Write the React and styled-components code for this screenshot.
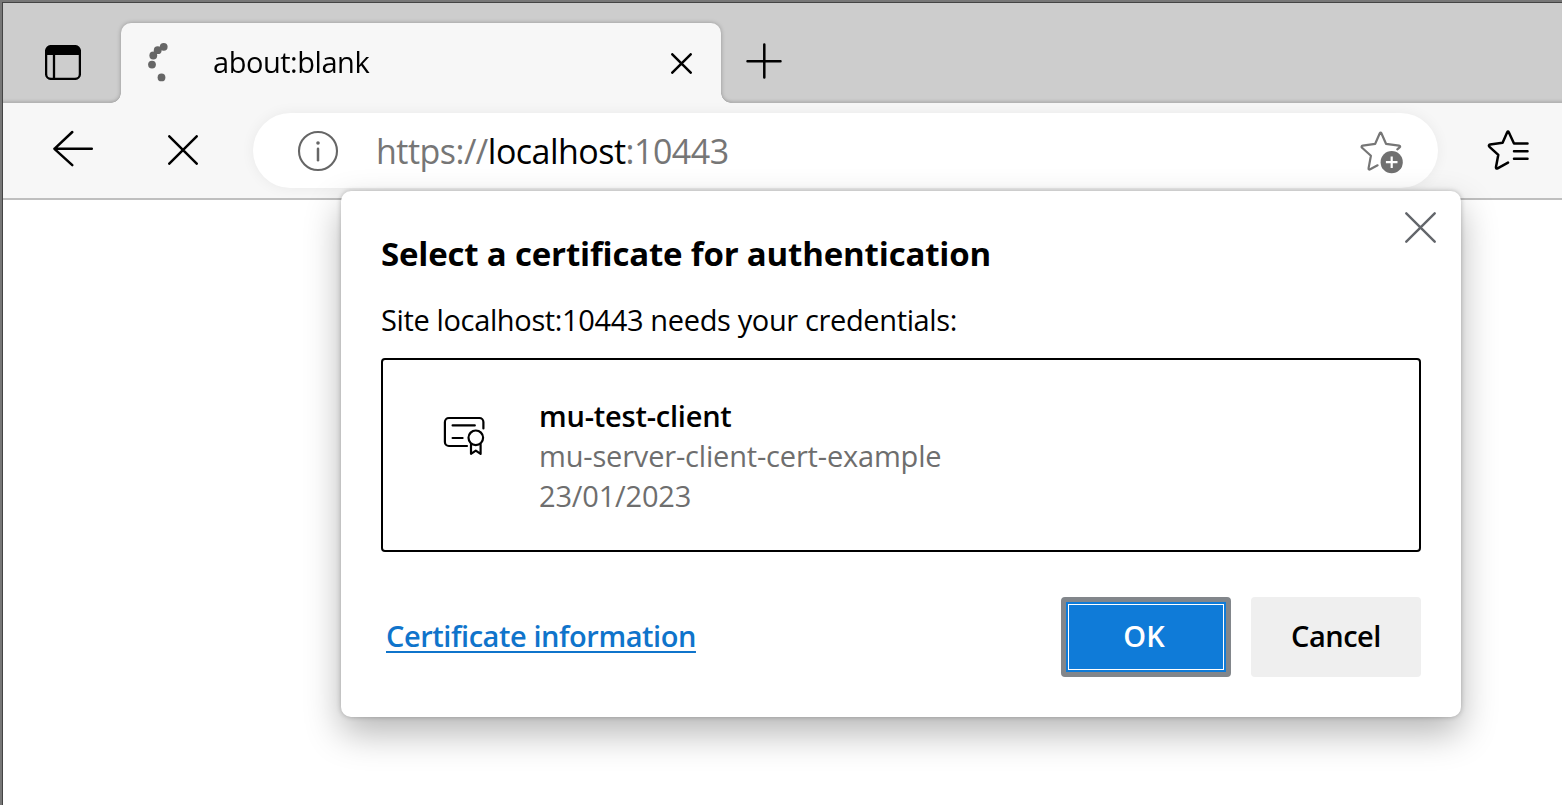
import React from "react";
import styled, { createGlobalStyle } from "styled-components";

const GlobalStyle = createGlobalStyle`
  * { box-sizing: border-box; }
  body { margin: 0; overflow: hidden; background: #fff; font-family: "Open Sans", "Noto Sans", sans-serif; color: #000; }
  svg { display: block; flex: none; }
`;

const Frame = styled.div`
  height: 805px;
  border: solid #777;
  border-width: 2px 0 0 2px;
`;

const Browser = styled.div`
  height: 803px;
  display: flex;
  flex-direction: column;
  border: solid #444;
  border-width: 1px 0 0 1px;
  background: #fff;
`;

const TabStrip = styled.div`
  height: 100px;
  flex: none;
  display: flex;
  align-items: flex-start;
  overflow: hidden;
  background: #cdcdcd;
  box-shadow: inset 0 -4px 3px -2px rgba(0, 0, 0, 0.14);
`;

const StripAction = styled.div`
  width: ${(p) => p.$width}px;
  padding: ${(p) => p.$pad};
`;

const Tab = styled.div`
  position: relative;
  width: 600px;
  height: 80px;
  margin-top: 20px;
  padding: 0 29px 0 25px;
  display: flex;
  align-items: center;
  background: #f7f7f7;
  border-radius: 10px 10px 0 0;
  filter: drop-shadow(0 0 2px rgba(0, 0, 0, 0.28));

  &::before, &::after {
    content: "";
    position: absolute;
    bottom: 0;
    width: 10px;
    height: 10px;
  }
  &::before { left: -10px; background: radial-gradient(circle at 0 0, transparent 9.5px, #f7f7f7 10px); }
  &::after { right: -10px; background: radial-gradient(circle at 100% 0, transparent 9.5px, #f7f7f7 10px); }
  & > svg:first-child { margin-bottom: 2px; }
  & > svg:last-child { margin-top: 1px; }
`;

const TabTitle = styled.div`
  flex: 1;
  margin: 0 0 3px 39px;
  font-size: 29px;
  line-height: 40px;
  letter-spacing: -0.46px;
  white-space: nowrap;
`;

const Toolbar = styled.div`
  height: 97px;
  flex: none;
  display: flex;
  align-items: center;
  padding: 0 32px 2px 49px;
  background: #f7f7f7;
  border-bottom: 2px solid #bfbfbf;
  & > svg { margin-top: 2px; }
`;

const ToolButton = styled.div`
  width: ${(p) => p.$width}px;
  padding-bottom: ${(p) => p.$lift || 0}px;
`;

const AddressBar = styled.div`
  width: 1185px;
  height: 75px;
  margin: 2px 49px 0 0;
  padding: 0 34px 0 44px;
  display: flex;
  align-items: center;
  border-radius: 38px;
  background: #fff;
  box-shadow: 0 0 14px rgba(0, 0, 0, 0.06);
  flex: 1;
  & > svg:last-child { margin-top: 2px; }
`;

const Url = styled.div`
  flex: 1;
  margin-left: 37px;
  font-size: 34px;
  line-height: 46px;
  letter-spacing: -0.52px;
  white-space: nowrap;
  color: #767676;
  & b { font-weight: 400; color: #000; }
`;

const Page = styled.div`
  flex: 1;
  background: #fff;
`;

const Dialog = styled.section`
  position: absolute;
  left: 341px;
  top: 191px;
  width: 1120px;
  height: 526px;
  padding: 40px;
  display: flex;
  flex-direction: column;
  border-radius: 10px;
  background: #fff;
  box-shadow: 0 16px 36px rgba(0, 0, 0, 0.29), 0 0 5px rgba(0, 0, 0, 0.25);
`;

const CloseButton = styled.div`
  position: absolute;
  top: 21px;
  right: 25px;
`;

const Title = styled.h1`
  margin: 0;
  font-size: 33px;
  line-height: 46px;
  font-weight: 700;
  letter-spacing: -0.18px;
  white-space: nowrap;
`;

const Message = styled.p`
  margin: 23px 0 18px;
  font-size: 29px;
  line-height: 40px;
  letter-spacing: -0.36px;
  white-space: nowrap;
`;

const CertificateRow = styled.div`
  height: 194px;
  padding: 36px 0 0 60px;
  display: flex;
  align-items: flex-start;
  gap: 52px;
  border: 2px solid #000;
  border-radius: 4px;
  & > svg { margin-top: 19px; }
`;

const CertificateText = styled.div`
  font-size: 29px;
  line-height: 40px;
  white-space: nowrap;
`;

const Subject = styled.div`
  font-weight: 600;
  letter-spacing: -0.22px;
`;

const Detail = styled.div`
  color: #6e6e6e;
  letter-spacing: -0.18px;
`;

const Footer = styled.footer`
  margin-top: 45px;
  display: flex;
  align-items: center;
  gap: 20px;
`;

const InfoLink = styled.a`
  margin: 0 auto 2px 5px;
  font-size: 29px;
  line-height: 36px;
  font-weight: 600;
  letter-spacing: -0.44px;
  color: #0f74cb;
  text-decoration: underline;
  text-decoration-thickness: 2px;
  text-underline-offset: 4px;
  text-decoration-skip-ink: none;
  white-space: nowrap;
`;

const Button = styled.button`
  width: 170px;
  height: 80px;
  padding: ${(p) => (p.$primary ? "0 4px 2px 0" : "0 0 2px")};
  border: ${(p) => (p.$primary ? "5px solid #82868b" : "0")};
  border-radius: 4px;
  font: 600 29px/40px "Open Sans", "Noto Sans", sans-serif;
  letter-spacing: ${(p) => (p.$primary ? "0" : "-0.5px")};
  color: ${(p) => (p.$primary ? "#fff" : "#000")};
  background: ${(p) => (p.$primary ? "#0f7bd8" : "#efefef")};
  outline: ${(p) => (p.$primary ? "1px solid #fff" : "none")};
  outline-offset: -8px;
`;

const Cross = ({ size, color = "#000", width = 2.5 }) => (
  <svg width={size} height={size} viewBox={`0 0 ${size} ${size}`} stroke={color} strokeWidth={width} strokeLinecap="round">
    <path d={`M1.3 1.3L${size - 1.3} ${size - 1.3}M${size - 1.3} 1.3L1.3 ${size - 1.3}`} />
  </svg>
);

const TabMenuIcon = () => (
  <svg width="36" height="35" viewBox="0 0 36 35" fill="none" stroke="#000" strokeWidth="2.3">
    <rect x="1.1" y="1.1" width="33.8" height="32.8" rx="5" />
    <path d="M1 10V6a5 5 0 0 1 5-5h24a5 5 0 0 1 5 5v4z" fill="#000" stroke="none" />
    <path d="M9 9v25" />
  </svg>
);

const Spinner = () => (
  <svg width="28" height="44" viewBox="0 0 28 44" fill="#666">
    <circle cx="17.7" cy="6.8" r="3.9" />
    <circle cx="11.7" cy="10.2" r="3.9" />
    <circle cx="7.3" cy="15.5" r="3.9" />
    <circle cx="6" cy="24.6" r="3.9" />
    <circle cx="15.5" cy="37.4" r="3.9" />
  </svg>
);

const PlusIcon = () => (
  <svg width="36" height="36" viewBox="0 0 36 36" stroke="#000" strokeWidth="2.5" strokeLinecap="round">
    <path d="M1.5 18.3h33M18.3 1.5v33" />
  </svg>
);

const BackIcon = () => (
  <svg width="42" height="38" viewBox="0 0 42 38" fill="none" stroke="#000" strokeWidth="2.5" strokeLinecap="round" strokeLinejoin="round">
    <path d="M20.3 2L2.4 18.8l17.9 16.4M2.4 18.8h37.4" />
  </svg>
);

const InfoIcon = () => (
  <svg width="42" height="42" viewBox="0 0 42 42" fill="none" stroke="#666" strokeWidth="2.1">
    <circle cx="21" cy="21" r="19" />
    <path d="M21 18.8v11.4" strokeWidth="2.5" strokeLinecap="round" />
    <circle cx="21" cy="13" r="1.8" fill="#666" stroke="none" />
  </svg>
);

const AddFavoriteIcon = () => (
  <svg width="44" height="44" viewBox="0 0 44 44" fill="none" stroke="#767676" strokeWidth="2.2" strokeLinecap="round" strokeLinejoin="round">
    <path d="M37.3 19.4l2.3-2c1-.8.6-1.6-.6-1.8L26 13.8l-4.6-10.5q-.8-1.6-1.6 0L15.2 13.8l-12.5 1.8c-1.2.2-1.6 1.4-.6 2.2l8.8 8-2.3 12.3c-.2 1.3.5 1.8 1.6 1.2l7.4-4" />
    <circle cx="31.7" cy="32.2" r="11.1" fill="#707070" stroke="none" />
    <path d="M31.7 26.4v11.6M25.9 32.2h11.6" stroke="#fff" strokeLinecap="butt" />
  </svg>
);

const FavoritesIcon = () => (
  <svg width="43" height="44" viewBox="0 0 43 44" fill="none" stroke="#000" strokeWidth="2.5" strokeLinecap="round" strokeLinejoin="round">
    <path d="M40.5 14.5H27L21.8 3.3q-.8-1.6-1.6 0L15.6 13.8l-12.5 1.8c-1.2.2-1.6 1.4-.6 2.2l8.8 8L9 38.1c-.2 1.3.5 1.8 1.6 1.2l10.4-5.7M27 22.2h13.5M27 29.8h13.5" />
  </svg>
);

const CertificateIcon = () => (
  <svg width="44" height="42" viewBox="0 0 44 42" fill="none" stroke="#000" strokeWidth="2.2" strokeLinecap="round" strokeLinejoin="round">
    <path d="M24 31H5.9a4 4 0 0 1-4-4V7a4 4 0 0 1 4-4h30.5a4 4 0 0 1 4 4v6.5M9.6 10.4h22.2M9.6 23h10" />
    <circle cx="32.8" cy="22.8" r="7.3" />
    <path d="M28 29.6v9.2l4.8-3.2 4.8 3.2v-9.2" />
  </svg>
);

export default function App() {
  return (
    <Frame>
      <GlobalStyle />
      <Browser>
        <TabStrip>
          <StripAction $width={118} $pad="42px 0 0 42px"><TabMenuIcon /></StripAction>
          <Tab>
            <Spinner />
            <TabTitle>about:blank</TabTitle>
            <Cross size={21} />
          </Tab>
          <StripAction $width={80} $pad="40px 0 0 25px"><PlusIcon /></StripAction>
        </TabStrip>
        <Toolbar>
          <ToolButton $width={116} $lift={1}><BackIcon /></ToolButton>
          <ToolButton $width={85}><Cross size={30} /></ToolButton>
          <AddressBar>
            <InfoIcon />
            <Url>https://<b>localhost</b>:10443</Url>
            <AddFavoriteIcon />
          </AddressBar>
          <FavoritesIcon />
        </Toolbar>
        <Page />
      </Browser>
      <Dialog>
        <CloseButton><Cross size={31} color="#63666b" width={2.4} /></CloseButton>
        <Title>Select a certificate for authentication</Title>
        <Message>Site localhost:10443 needs your credentials:</Message>
        <CertificateRow>
          <CertificateIcon />
          <CertificateText>
            <Subject>mu-test-client</Subject>
            <Detail>mu-server-client-cert-example</Detail>
            <Detail>23/01/2023</Detail>
          </CertificateText>
        </CertificateRow>
        <Footer>
          <InfoLink>Certificate information</InfoLink>
          <Button $primary>OK</Button>
          <Button>Cancel</Button>
        </Footer>
      </Dialog>
    </Frame>
  );
}
